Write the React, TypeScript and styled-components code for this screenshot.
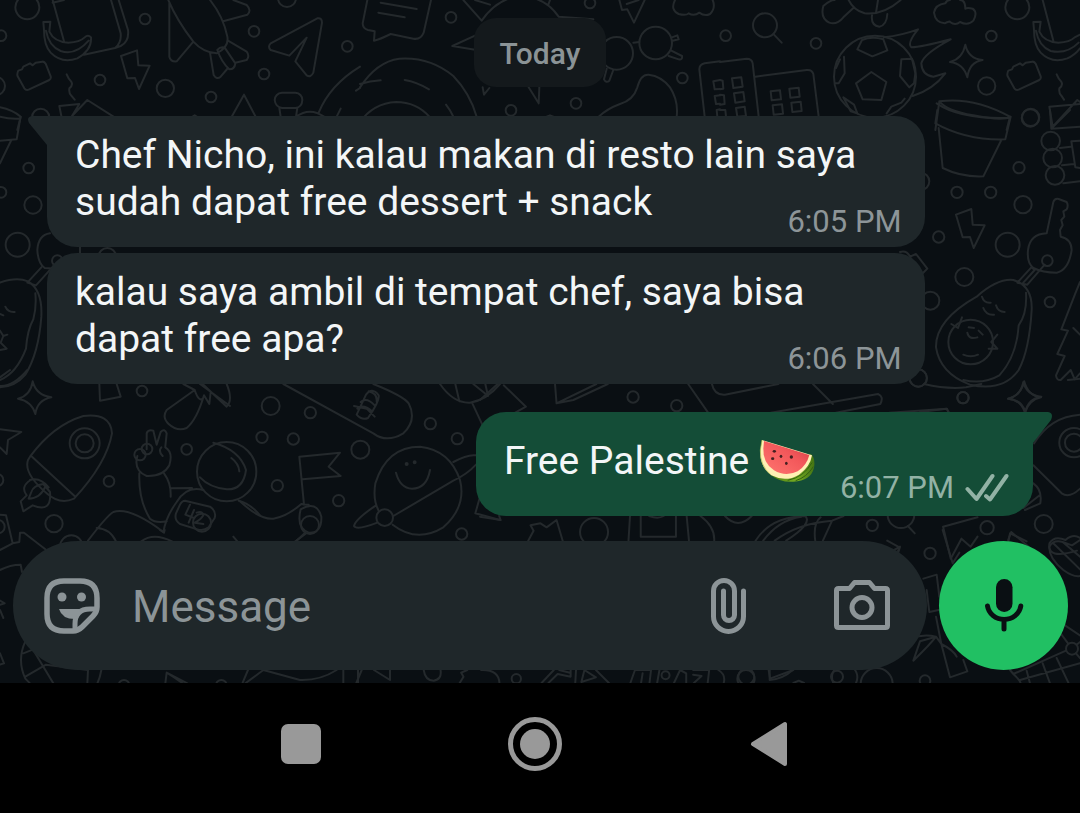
import React from "react";
import styled, { createGlobalStyle, css } from "styled-components";

const GlobalStyle = createGlobalStyle`
  * { box-sizing: border-box; }
  body { margin: 0; background: #000; }
  body, button, input { font-family: Roboto, "Liberation Sans", sans-serif; }
`;

const Screen = styled.div`
  display: flex;
  flex-direction: column;
  min-height: 100vh;
`;

const Chat = styled.main`
  position: relative;
  flex: 1;
  display: flex;
  flex-direction: column;
  overflow: hidden;
  background: #0a0f13;
`;

const WallpaperSvg = styled.svg`
  position: absolute;
  inset: 0;
  width: 100%;
  height: 100%;
  fill: none;
  stroke: #24292c;
  stroke-width: 2;
  stroke-linecap: round;
  stroke-linejoin: round;
  path, ellipse { vector-effect: non-scaling-stroke; }
`;

const Thread = styled.section`
  position: relative;
  flex: 1;
  display: flex;
  flex-direction: column;
  padding: 18px 47px 0;
`;

const DateChip = styled.div`
  align-self: center;
  padding: 17px 26px 15px;
  margin-bottom: 29px;
  border-radius: 22px;
  background: #14191c;
  color: #8b9396;
  font-size: 30px;
  font-weight: 500;
  line-height: 37px;
`;

const Bubble = styled.article<{ $out?: boolean; $first?: boolean }>`
  position: relative;
  display: grid;
  max-width: 89%;
  width: ${(p) => (p.$out ? "auto" : "100%")};
  align-self: ${(p) => (p.$out ? "flex-end" : "flex-start")};
  padding: 16px 23px 7px 28px;
  margin-bottom: 6px;
  border-radius: 30px;
  background: #1f272a;
  color: #f3f6f7;
  ${(p) => p.$first && css`border-top-left-radius: 0;`}
  ${(p) =>
    p.$out &&
    css`
      display: flex;
      gap: 25px;
      margin-top: 22px;
      margin-bottom: 0;
      padding-right: 24px;
      padding-bottom: 10px;
      border-top-right-radius: 0;
      background: #144d37;
    `}
`;

const Text = styled.p<{ $emoji?: boolean }>`
  grid-area: 1 / 1;
  margin: 0;
  padding-bottom: ${(p) => (p.$emoji ? 11 : 14)}px;
  font-size: 39px;
  line-height: ${(p) => (p.$emoji ? 67 : 47)}px;
`;

const Meta = styled.div<{ $out?: boolean }>`
  grid-area: 1 / 1;
  align-self: end;
  justify-self: end;
  display: flex;
  align-items: center;
  gap: 11px;
  color: ${(p) => (p.$out ? "#92b2a5" : "#8d9598")};
  font-size: 31px;
  line-height: 36px;
  white-space: nowrap;
`;

const Tail = styled.svg<{ $right?: boolean }>`
  position: absolute;
  top: 0;
  ${(p) => (p.$right ? "right: -20px;" : "left: -20px;")}
  fill: ${(p) => (p.$right ? "#144d37" : "#1f272a")};
`;

const Melon = styled.svg`
  vertical-align: -9px;
`;

const Composer = styled.form`
  position: relative;
  display: flex;
  align-items: center;
  gap: 12px;
  padding: 25px 12px 13px 13px;
`;

const Field = styled.div`
  flex: 1;
  display: flex;
  align-items: center;
  min-width: 0;
  height: 129px;
  padding: 0 37px 0 31px;
  border-radius: 65px;
  background: #1f272a;
  color: #8c9497;
`;

const MessageInput = styled.input`
  flex: 1;
  min-width: 0;
  height: 64px;
  margin: 0 20px 0 32px;
  padding: 2px 0 0;
  border: 0;
  outline: 0;
  background: none;
  color: #f3f6f7;
  font-size: 44px;
  &::placeholder { color: #8c9497; opacity: 1; }
`;

const IconButton = styled.button<{ $gap?: number }>`
  display: flex;
  margin: 0 0 0 ${(p) => p.$gap ?? 0}px;
  padding: 0;
  border: 0;
  background: none;
  color: inherit;
`;

const MicButton = styled.button`
  display: grid;
  place-items: center;
  width: 129px;
  height: 129px;
  padding: 0;
  border: 0;
  border-radius: 50%;
  background: #21c063;
  color: #0a0f13;
`;

const NavBar = styled.nav`
  display: grid;
  grid-template-columns: repeat(3, 1fr);
  height: 130px;
  padding: 0 18% 8px 17%;
  background: #000;
`;

const NavButton = styled.button`
  display: grid;
  place-items: center;
  padding: 0;
  border: 0;
  background: none;
  color: #999;
`;

type Dot = [number, number, number];

/* One patch of the doodle wallpaper, drawn on its own finer grid. */
function Patch({ x, y, sx = 3, dots = [], d }: { x: number; y: number; sx?: number; dots?: Dot[]; d: string }) {
  return (
    <g transform={`translate(${x} ${y}) scale(${1 / sx} ${1 / 3})`}>
      {dots.map(([cx, cy, r], i) => (
        <ellipse key={i} cx={cx} cy={cy} rx={(r * sx) / 3} ry={r} />
      ))}
      <path d={d} />
    </g>
  );
}

function Wallpaper() {
  return (
    <WallpaperSvg aria-hidden="true">
      {/* toast, banana, rocket, paper plane, dish */}
      <Patch x={0} y={0}
        dots={[[82, 22, 36], [3, 107, 16], [-12, 258, 27], [435, 57, 16], [300, 240, 16], [496, 265, 26], [633, 291, 16], [762, 94, 16], [792, 222, 16], [1042, 139, 16], [861, -6, 27], [122, 352, 26]]}
        d="M158 0L192 124M333 0L362 100Q365 128 345 144L252 164M356 0L384 90Q388 125 362 138L345 144M158 8L192 0
        M130 66L151 65L148 95Q162 126 205 128Q240 126 254 112Q264 102 273 112Q276 150 232 175Q185 192 152 158Q132 136 132 90ZM138 92Q146 138 182 153Q226 168 266 122
        M55 212L66 208L70 200L90 190L98 196L107 188L127 185Q133 184 137 191L152 229Q154 236 148 240L86 269Q78 272 73 265L53 229Q50 222 55 212Z
        M200 223Q206 238 214 245Q220 256 208 265Q206 280 214 287L224 299
        M178 318L238 312L216 348M178 318L184 348M216 348L262 300L344 352M0 322Q38 330 62 350L52 390M0 350Q30 358 58 356
        M363 168L411 151L415 196L449 197L417 267L405 234L382 235ZM578 350L584 346L590 350
        M505 0Q530 60 580 125Q610 158 650 160Q688 140 682 110Q670 50 630 0M508 10L508 170Q512 186 530 184L580 125
        M630 158L641 225Q650 240 662 230L684 204M684 122L740 155Q750 168 740 180L706 188M652 150Q662 138 674 143L706 190Q704 208 688 208Q664 186 652 150M700 0L740 15Q756 32 742 44L672 63
        M812 130L952 55Q966 52 966 68L940 218Q932 234 920 226L886 184L920 113L868 167L812 150Q802 140 812 130Z
        M695 350L732 284L767 350M846 278L886 278Q906 280 907 300Q906 322 886 324L846 324Q826 320 824 300Q826 280 846 278ZM838 324L842 350M892 324L888 350M888 350Q930 320 972 350M956 338Q990 255 1080 200M1010 350L1022 326M1068 272L1080 264" />
      {/* note, sun, glasses, guitar */}
      <Patch x={360} y={0}
        dots={[[273, 52, 16], [453, 331, 16], [648, 310, 16], [967, 234, 16], [690, 9, 16], [887, 129, 49], [770, 160, 49]]}
        d="M22 0L8 70Q8 86 24 90L44 94L42 122Q60 118 92 102L160 116Q182 120 191 98L213 0M62 8L170 27M55 38L134 52
        M310 0L365 62Q410 -4 480 -12Q555 -10 596 50L700 58M345 0L390 14M570 0L565 14M345 107L277 138L345 149M368 262L372 284L388 264M506 262L536 310L538 262
        M0 262Q50 185 118 176Q210 170 280 228Q330 280 350 350M0 366Q40 310 108 306Q170 306 210 352M0 252Q30 243 62 241M134 240Q170 246 207 268M258 314Q272 332 280 350
        M820 128L838 126M936 112L952 106L956 118L938 122M934 152L966 168Q968 180 956 178L926 168M740 206L732 238Q738 250 748 242L760 210
        M778 0L786 30L802 28L822 68L854 0M800 12L836 0M945 0Q930 30 956 42Q978 48 986 40Q1002 50 1018 38Q1034 50 1050 42Q1068 24 1058 0
        M716 350Q742 326 780 312Q820 300 832 262Q842 222 866 224Q904 228 930 262Q956 302 950 350M1080 184L1034 190Q1018 194 1018 208L1034 350M1080 240L1060 244L1064 268L1080 267M1080 286L1064 288L1068 312L1080 311M1080 328L1070 330L1072 350M560 350L570 346L580 350" />
      {/* buildings, football, cloud, star, pot */}
      <Patch x={720} y={0}
        dots={[[135, 76, 36], [17, 107, 16], [288, 130, 16], [814, 108, 16], [800, 258, 26], [892, 22, 36], [932, 352, 26], [465, 230, 123]]}
        d="M162 104L185 128M0 186L80 176Q96 176 98 190L116 350M106 230L260 210Q276 208 280 222L296 350
        M36 235L64 232L68 260L40 264ZM42 280L70 276L74 304L46 308ZM48 324L74 320L78 348L52 350ZM0 240L8 242L10 266L0 268M0 284L12 286L14 312L0 314M0 330L16 330L18 350M152 274L180 271L183 298L155 301ZM208 266L236 263L239 290L211 293ZM158 316L186 313L189 341L161 344ZM214 308L242 305L245 333L217 336Z
        M454 216L499 246L484 300L428 298L408 250ZM426 120Q455 108 490 118L502 151L457 169L412 148ZM544 178L576 176L586 220L582 250L568 262L540 228ZM372 170L374 220L356 250L346 250M348 204L360 178ZM370 292L402 314L412 340L392 334ZM500 340L514 320L544 308L554 296
        M492 112Q545 106 594 88Q560 130 574 142Q602 142 692 118Q610 162 604 190Q606 226 640 230L676 220Q640 268 578 288
        M310 18Q300 54 328 68Q350 76 370 52L400 24M310 18Q330 0 344 0M386 0Q400 30 434 40Q490 46 542 0M474 0L468 38M456 46Q452 76 478 80Q500 76 502 42
        M676 10Q646 14 642 38Q646 68 674 70Q690 62 690 66Q706 78 720 66Q744 78 760 62Q774 38 758 26Q742 22 736 26Q736 0 720 0M676 10Q680 0 690 0
        M736 134Q745 176 788 180Q748 186 742 232Q730 190 690 186Q728 176 736 134Z
        M658 304Q760 290 870 350Q850 364 760 346Q680 332 658 304L646 390M870 350L860 390
        M968 0L1000 122M940 66L962 65L958 95Q972 126 1015 128Q1050 126 1064 112L1080 104M940 66L942 90Q942 136 962 158Q995 192 1042 175Q1065 165 1080 145M948 92Q956 138 992 153Q1040 164 1076 128
        M865 212L876 208L880 200L900 190L908 196L917 188L937 185Q943 184 947 191L962 229Q964 236 958 240L896 269Q888 272 883 265L863 229Q860 222 865 212Z
        M1010 223Q1016 238 1024 245Q1030 256 1018 265Q1016 280 1024 287L1032 299M1080 312L988 320L998 380L1072 300L1080 306" />
      {/* pot, key, avocado */}
      <Patch x={900} y={110}
        dots={[[391, 24, 26], [62, 214, 26], [171, 247, 17], [272, 247, 17], [357, 173, 17], [369, 284, 26], [116, 381, 17], [323, 404, 36], [193, 501, 27], [91, 572, 27], [450, 576, 16], [55, 804, 26], [189, 863, 17], [442, 452, 16], [452, 93, 28], [458, 144, 28], [465, 196, 28], [212, 696, 67]]}
        d="M112 0L106 40Q200 92 316 88L332 20M116 54L128 174Q185 202 250 199L304 90M110 -20Q180 28 328 24M450 0L454 56L540 50M454 56L510 0M480 114L512 110M486 166L522 162M490 220L540 214M540 92L514 94L526 172L540 174
        M168 314L214 297L218 344L254 346L221 414L210 381L188 382Z
        M440 370L460 276Q464 264 476 267L500 276Q506 286 500 298L490 304L493 320L484 330L488 346L480 360L482 380Q514 386 515 420Q506 480 470 488Q428 488 400 474Q380 458 384 420Q390 372 440 370
        M434 464L382 524L352 518L394 472L404 480L370 518
        M230 560Q292 505 340 510Q398 528 395 600Q388 720 356 780Q310 846 210 824Q120 790 108 712Q106 630 230 560M378 548Q382 610 356 646Q350 740 298 796Q250 824 190 810M246 560Q252 580 272 578M250 594Q258 616 282 614M288 586Q294 606 314 606M202 668Q206 690 232 682M206 652L222 654M236 662L248 674M190 734Q212 744 234 734M154 642L174 654L186 622M292 674L274 696L292 716L266 716
        M370 816Q380 856 424 860Q384 866 376 906Q366 870 324 866Q362 858 370 816Z
        M540 516L526 550L484 658L504 662L472 732L494 738L468 796Q470 812 482 810L512 780L524 808L540 790M520 654L540 674M0 426Q20 420 30 440L48 432L82 476L66 492L32 444M60 906L140 896L146 906" />
      {/* repeat of the key and avocado on the left */}
      <Patch x={0} y={100}
        dots={[[86, 204, 16], [3, 277, 16], [99, 315, 26], [53, 434, 36], [172, 482, 16], [322, 470, 26]]}
        d="M62 50L50 118L0 122M34 120L0 190M150 400Q115 405 112 450Q114 490 134 504L170 506M164 494L108 556L82 548L124 502
        M0 548Q50 530 84 544Q128 570 124 650Q116 760 76 824Q46 860 0 862M0 840Q50 820 78 746Q82 690 100 658Q110 620 106 580M16 620Q24 638 44 636M0 642L10 646M0 692L10 708L22 704M10 708L2 728L20 746L0 750M240 440V465" />
      {/* star, rocket, peace hand, astronaut */}
      <Patch x={0} y={370}
        dots={[[254, 220, 45], [254, 220, 27], [426, 63, 16], [560, 238, 16], [327, 334, 16], [162, 461, 26], [680, 305, 89], [-8, 330, 18], [-6, 470, 20], [420, 254, 17], [441, 237, 16], [214, 530, 34]]}
        d="M98 34Q108 76 154 82Q112 90 106 132Q96 94 54 86Q92 76 98 34ZM0 178L64 186L24 210L20 252L0 232M0 48Q40 50 82 0M0 22L30 0
        M90 260Q160 165 250 138Q332 128 336 190Q320 280 222 386Q180 406 140 370Q70 310 84 270ZM96 260L226 380M92 330Q60 350 80 376L62 394L70 424L98 406Q156 430 150 366L130 342Q100 346 94 366L86 386Q120 386 136 350M90 330Q120 320 146 352
        M298 42L300 92L362 80L350 42M550 42L584 60L500 120Q485 142 506 162Q532 186 560 174Q590 150 612 76L628 102L632 66M584 60Q596 96 608 86M608 42L680 110Q700 90 680 42M600 42L690 108
        M440 238L440 190Q444 178 460 182L470 224L482 186Q494 174 500 190L496 230M484 232Q474 244 488 258M496 232Q520 246 508 286Q490 320 440 318Q400 302 412 258M418 310Q415 390 450 446Q466 460 500 454M492 310Q514 340 512 380M512 355L576 354
        M640 218Q720 240 738 300Q730 360 680 358Q628 352 600 322M694 264Q716 280 718 304M610 360Q560 346 530 396Q498 440 490 486Q390 410 340 426Q320 438 264 512M290 474Q330 476 348 514M716 392Q750 400 780 436
        M555 392L630 410Q650 424 644 444L626 472Q610 484 592 478L540 462Q522 450 528 430L540 404Q546 392 555 392ZM570 404L556 434L582 444M582 420L566 458M590 428Q610 422 610 436Q602 450 584 458L610 462
        M0 434L18 436L38 520L58 516L60 488L72 488L136 538M424 514Q460 486 516 514M700 500L712 514M38 520L0 540" />
      {/* skateboard, flag, planet */}
      <Patch x={240} y={370}
        dots={[[92, 108, 27], [211, 128, 17], [66, 202, 17], [160, 207, 17], [112, 347, 17], [296, 392, 17], [361, 239, 27], [571, 161, 17], [652, 206, 17], [665, 492, 17], [434, 443, 25], [500, 282, 3], [524, 277, 3]]}
        d="M130 42L400 190Q440 220 490 190Q532 150 506 100Q490 78 400 42M378 74Q396 50 416 76Q420 92 384 144Q366 152 350 134ZM362 96Q380 80 404 106M352 116Q370 100 396 124M342 108L380 116L404 140M386 64Q412 70 410 94
        M178 260L300 248L266 290L302 318L188 328M178 260L192 404M0 394Q60 450 100 446Q140 440 184 402L206 404M182 418Q230 390 244 440Q246 490 206 488Q168 474 182 418M194 490L168 514
        M458 464Q530 520 610 472Q680 410 660 330Q630 240 540 230Q440 230 406 340Q398 390 416 422M468 308Q480 354 516 356Q560 356 570 300M640 276Q684 252 708 256M708 284Q680 314 640 332L460 438M408 406Q346 448 342 468Q350 482 412 458
        M600 42Q640 100 690 98Q740 90 780 42M646 42L658 94M700 42L742 76M696 98L728 166M736 42L744 78M720 380L706 430L780 450" />
      {/* laptop corner, right-hand ring, objects under the reply */}
      <Patch x={480} y={380} sx={2.613}
        dots={[[400, 51, 17], [514, 77, 17], [1262, 53, 17], [1145, -6, 26], [1325, 443, 20], [1025, 436, 17], [1473, 432, 27], [1176, 520, 17], [1552, 188, 44], [1552, 188, 27], [298, 456, 42], [1100, 404, 40]]}
        d="M196 12L200 70L304 12M200 70L244 60L334 12M606 12Q612 46 640 44L780 12M544 12L596 98M870 12L922 72M760 98L1040 42Q1056 50 1046 72L930 98M1070 98L1220 86L1224 98M0 60L46 12M62 16L120 80L92 98M1160 12Q1220 28 1270 22L1310 12M1536 0L1568 -4
        M1422 4Q1432 48 1466 52Q1434 60 1424 98Q1414 60 1380 56Q1414 46 1422 4ZM1448 190Q1490 110 1568 104M1446 256L1520 340Q1540 356 1568 326M1446 310Q1470 330 1464 370L1424 390M1464 344L1420 384
        M0 410L54 420L50 408M126 482L140 452L132 436L158 430L174 442L200 420L216 482M392 408L388 482M420 408V470H512V408M442 408Q465 418 480 408M540 408L546 482M576 408Q614 440 612 482M640 408Q674 450 710 408M720 482Q760 410 850 408Q870 430 800 482M740 482Q780 420 840 410M770 482Q830 430 920 422L950 408M920 422L896 482M876 482Q870 430 890 412M1118 438L1136 460M1210 440L1300 412M1210 440L1230 536L1258 476L1282 500L1300 470M1380 480L1388 456L1440 506M1560 512Q1480 540 1488 490Q1500 466 1530 480Q1550 460 1568 474M1064 482L1096 502L1090 520" />
      {/* left-hand basket ball and strip under the field */}
      <Patch x={0} y={530}
        dots={[[372, 466, 16], [664, 466, 16], [930, -15, 27], [606, -22, 27]]}
        d="M0 120Q30 104 62 104L66 126M0 212L14 220L0 224M0 240L10 264M0 370L12 400L0 404M76 334Q50 390 76 446L90 460M70 370L100 358M84 334L160 460M76 440L138 404M138 404L264 420M264 420L262 460M304 420Q300 444 292 460M496 460L500 428L562 460M500 428Q520 440 548 460M728 458L744 420M736 460L790 420L900 450Q960 452 1010 420M1030 420V460M1074 420V460M886 34L916 12M480 0L492 8L494 0" />
      <Patch x={240} y={660} sx={2.613}
        dots={[[722, 56, 14], [1323, 50, 24], [1112, 46, 12], [1560, 50, 18]]}
        d="M304 69L318 30M350 30L392 60V30M480 30Q484 62 506 62Q528 58 524 30M574 69L584 50L578 38L594 30M630 30Q676 28 678 69M788 69L820 30M806 69L830 42L864 50V30M834 30L862 38M876 69L878 30M892 66L900 30L930 52ZM930 30L964 69M1020 69L1032 30H1074L1070 69M1052 40L1048 69M1096 30L1090 69M1134 69L1150 30L1166 40V69M1184 30H1226L1222 69M1184 44L1206 48L1186 69M1250 30Q1270 44 1264 69M1384 30V60Q1420 56 1444 30M1446 69L1460 62L1474 69" />
      {/* around the microphone */}
      <Patch x={680} y={530}
        dots={[[1176, 356, 18], [735, 452, 16], [494, 442, 38], [590, 462, 48], [198, 446, 26]]}
        d="M788 0L818 100L838 68M730 146L770 134L778 200M740 180L748 246L776 240M692 326Q730 310 768 320Q750 344 700 392L720 334L768 320L784 342M768 260L784 342L810 442L862 424L850 390M784 342Q820 360 830 380
        M1108 50Q1120 28 1148 36L1176 46L1200 30M1108 50Q1106 84 1150 120Q1180 142 1200 138M1120 40L1200 118M1148 36L1200 80M985 36L990 10L1040 34M1130 294L1164 340M1114 274L1146 280L1200 316M1190 344L1200 336M1188 370L1200 384M1158 362L1000 432M1000 432Q1020 450 1022 460M1040 422L1050 460M1088 400L1110 460M1130 384L1166 460M1020 450L1200 400M635 64L660 50L654 70M1000 432L990 420M266 420L270 446L340 420" />
    </WallpaperSvg>
  );
}

function Watermelon() {
  return (
    <Melon width="56" height="45" viewBox="62 56 168 135" role="img" aria-label="watermelon">
      <defs>
        <linearGradient id="flesh" x1="0" y1="1" x2="1" y2="0">
          <stop offset="0" stopColor="#ff7770" />
          <stop offset="0.6" stopColor="#f2575a" />
          <stop offset="1" stopColor="#cf3d43" />
        </linearGradient>
        <linearGradient id="rind" x1="0" y1="0" x2="1" y2="0">
          <stop offset="0" stopColor="#4c7d12" />
          <stop offset="0.6" stopColor="#76ad22" />
          <stop offset="1" stopColor="#437313" />
        </linearGradient>
      </defs>
      <path d="M218 104Q232 118 227 145Q218 184 165 187Q126 190 96 166Z" fill="url(#rind)" />
      <path d="M148 183Q196 174 221 130M172 184Q205 174 225 142" fill="none" stroke="#335f12" strokeWidth="3" />
      <path d="M71 62L66 92Q63 142 99 168Q142 190 182 166Q216 142 221 108Z" fill="#fff0b4" />
      <path d="M71 62L66 92Q64 138 97 166" fill="none" stroke="#a7bd4a" strokeWidth="2" />
      <path d="M77 65L213 107Q205 139 178 156Q142 174 107 153Q73 130 75 88Z" fill="url(#flesh)" />
      <g fill="#442021">
        <ellipse cx="108" cy="96" rx="5" ry="4" />
        <ellipse cx="103" cy="118" rx="5" ry="4" />
        <ellipse cx="128" cy="111" rx="4" ry="5" />
        <ellipse cx="159" cy="113" rx="5" ry="5" />
        <ellipse cx="144" cy="132" rx="4" ry="5" />
      </g>
    </Melon>
  );
}

const StickerIcon = () => (
  <svg width="56" height="56" viewBox="0 0 56 56" fill="none" stroke="currentColor" strokeWidth="5.5">
    <path d="M20 3H36Q53 3 53 20V29Q53 34 49 38L38 49Q34 53 29 53H20Q3 53 3 36V20Q3 3 20 3Z" />
    <path d="M31 53V46Q31 31 46 31H53" strokeWidth="5" />
    <path d="M15 31H38Q33 35 31 41Q18 41 15 31Z" fill="currentColor" stroke="none" />
    <circle cx="18" cy="19" r="4.500" fill="currentColor" stroke="none" />
    <circle cx="37.500" cy="19" r="4.500" fill="currentColor" stroke="none" />
  </svg>
);

const ClipIcon = () => (
  <svg width="36" height="56" viewBox="0 0 36 56" fill="none" stroke="currentColor" strokeWidth="5" strokeLinecap="round">
    <path d="M32.500 13V38.500A15 15 0 0 1 2.500 38.500V13A10.500 10.500 0 0 1 23.500 13V37A5.500 5.500 0 0 1 12.500 37V13" />
  </svg>
);

const CameraIcon = () => (
  <svg width="56" height="52" viewBox="0 0 56 52" fill="none" stroke="currentColor" strokeWidth="5" strokeLinejoin="round">
    <path d="M4.500 8.500H15.500L20.500 2.500H35.500L40.500 8.500H51.500Q53.500 8.500 53.500 10.500V45.500Q53.500 47.500 51.500 47.500H4.500Q2.500 47.500 2.500 45.500V10.500Q2.500 8.500 4.500 8.500Z" />
    <circle cx="28" cy="27.500" r="10" />
  </svg>
);

const MicIcon = () => (
  <svg width="40" height="54" viewBox="0 0 40 54" fill="none" stroke="currentColor" strokeWidth="5" strokeLinecap="round">
    <rect x="12" y="0" width="16.500" height="33" rx="8.200" fill="currentColor" stroke="none" />
    <path d="M3.500 27A16.800 15.500 0 0 0 36.800 27M20 43V50" />
  </svg>
);

export default function App() {
  return (
    <Screen>
      <GlobalStyle />
      <Chat>
        <Wallpaper />
        <Thread>
          <DateChip>Today</DateChip>
          <Bubble $first>
            <Tail width="21" height="30" viewBox="0 0 21 30">
              <path d="M21 0H5Q-1 1 2 7L20 29H21Z" />
            </Tail>
            <Text>Chef Nicho, ini kalau makan di resto lain saya sudah dapat free dessert + snack</Text>
            <Meta><time>6:05 PM</time></Meta>
          </Bubble>
          <Bubble>
            <Text>kalau saya ambil di tempat chef, saya bisa dapat free apa?</Text>
            <Meta><time>6:06 PM</time></Meta>
          </Bubble>
          <Bubble $out>
            <Tail $right width="21" height="32" viewBox="0 0 21 32">
              <path d="M0 0H16Q22 1 19 8L1 31H0Z" />
            </Tail>
            <Text $emoji>Free Palestine <Watermelon /></Text>
            <Meta $out>
              <time>6:07 PM</time>
              <svg width="44" height="30" viewBox="0 0 44 30" fill="none" stroke="currentColor" strokeWidth="4" strokeLinecap="round" strokeLinejoin="round" role="img" aria-label="Delivered">
                <path d="M2.500 16L11.500 26L27.500 3M21 23L25 26.500L41.500 3" />
              </svg>
            </Meta>
          </Bubble>
        </Thread>
        <Composer onSubmit={(e) => e.preventDefault()}>
          <Field>
            <IconButton type="button" aria-label="Stickers"><StickerIcon /></IconButton>
            <MessageInput type="text" placeholder="Message" aria-label="Message" />
            <IconButton type="button" aria-label="Attach"><ClipIcon /></IconButton>
            <IconButton type="button" aria-label="Camera" $gap={87}><CameraIcon /></IconButton>
          </Field>
          <MicButton type="button" aria-label="Record voice message"><MicIcon /></MicButton>
        </Composer>
      </Chat>
      <NavBar aria-label="System">
        <NavButton type="button" aria-label="Recent apps">
          <svg width="40" height="40"><rect width="40" height="40" rx="7" fill="currentColor" /></svg>
        </NavButton>
        <NavButton type="button" aria-label="Home">
          <svg width="54" height="54" viewBox="0 0 54 54">
            <circle cx="27" cy="27" r="24.500" fill="none" stroke="currentColor" strokeWidth="5" />
            <circle cx="27" cy="27" r="15" fill="currentColor" />
          </svg>
        </NavButton>
        <NavButton type="button" aria-label="Back">
          <svg width="38" height="46" viewBox="0 0 38 46">
            <path d="M3 23L35 3V43Z" fill="currentColor" stroke="currentColor" strokeWidth="4" strokeLinejoin="round" />
          </svg>
        </NavButton>
      </NavBar>
    </Screen>
  );
}
